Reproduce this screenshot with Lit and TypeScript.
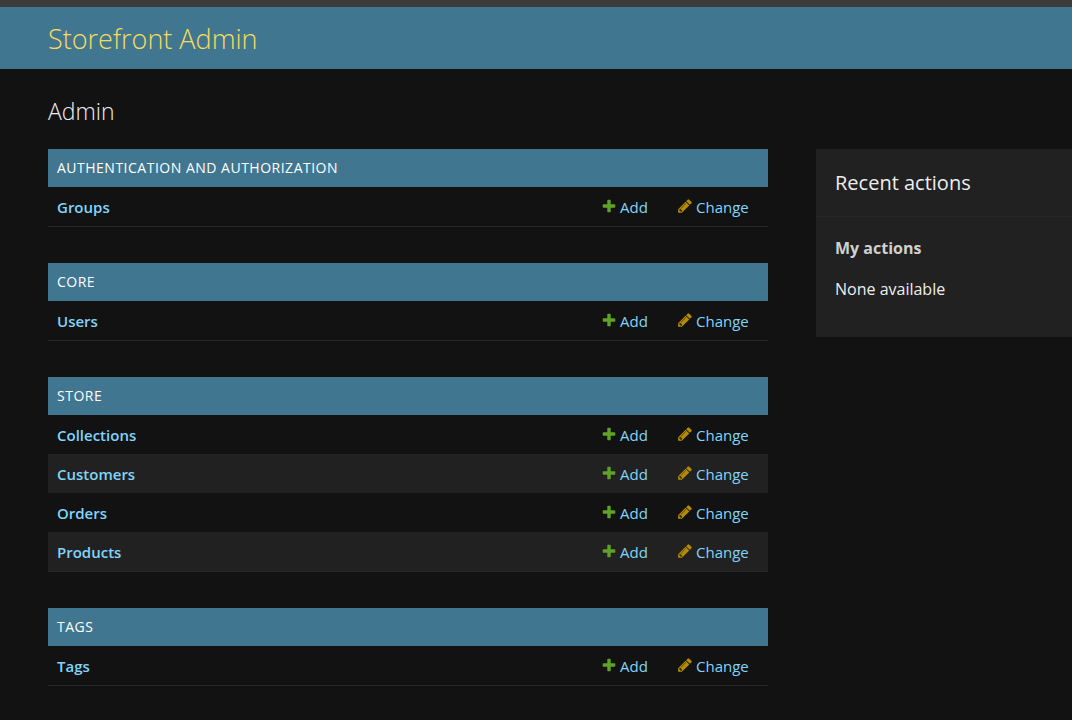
import { LitElement, html, css, svg } from "lit";
import { customElement, property } from "lit/decorators.js";

interface AppModule {
  label: string;
  models: string[];
}

const modules: AppModule[] = [
  { label: "Authentication and Authorization", models: ["Groups"] },
  { label: "Core", models: ["Users"] },
  { label: "Store", models: ["Collections", "Customers", "Orders", "Products"] },
  { label: "Tags", models: ["Tags"] },
];

const addIcon = svg`<path fill="#5fa225" d="M1600 796v192q0 40-28 68t-68 28h-416v416q0 40-28 68t-68 28h-192q-40 0-68-28t-28-68v-416h-416q-40 0-68-28t-28-68v-192q0-40 28-68t68-28h416v-416q0-40 28-68t68-28h192q40 0 68 28t28 68v416h416q40 0 68 28t28 68z"/>`;
const changeIcon = svg`<path fill="#b48c08" d="M491 1536l91-91-235-235-91 91v107h128v128h107zm523-928q0-22-22-22-10 0-17 7l-542 542q-7 7-7 17 0 22 22 22 10 0 17-7l542-542q7-7 7-17zm-54-192l416 416-832 832h-416v-416zm683 96q0 53-37 90l-166 166-416-416 166-165q36-38 90-38 53 0 91 38l235 234q37 39 37 91z"/>`;

@customElement("app-module")
export class AppModuleTable extends LitElement {
  @property({ attribute: false }) module!: AppModule;

  static styles = css`
    :host {
      display: block;
    }
    .table {
      width: 100%;
      table-layout: fixed;
      border-collapse: separate;
      border-spacing: 0;
      border-bottom: 1px solid #272727;
    }
    .caption {
      box-sizing: border-box;
      height: 38px;
      padding: 0 9px;
      background: #417690;
      font-size: 14px;
      line-height: 38px;
      letter-spacing: 0.5px;
      text-align: left;
      text-transform: uppercase;
    }
    .caption-link {
      color: #fff;
      text-decoration: none;
    }
    .row:nth-child(even) {
      background: #212121;
    }
    .cell {
      box-sizing: border-box;
      height: 39px;
      padding: 0 0 0 9px;
      text-align: left;
      vertical-align: middle;
      font-size: 15px;
      line-height: 20px;
      font-weight: 400;
    }
    .name {
      font-weight: 600;
    }
    .add {
      width: 76px;
    }
    .change {
      width: 100px;
    }
    .link {
      color: #81d4fa;
      text-decoration: none;
    }
    .action {
      display: flex;
      gap: 3px;
    }
    .icon {
      flex: none;
      width: 16px;
      height: 16px;
      margin-top: 1px;
    }
  `;

  render() {
    return html`
      <table class="table">
        <caption class="caption">
          <a class="caption-link" href="#">${this.module.label}</a>
        </caption>
        <tbody>
          ${this.module.models.map(
            (name) => html`<tr class="row">
              <th class="cell name" scope="row"><a class="link" href="#">${name}</a></th>
              <td class="cell add">
                <a class="link action" href="#"
                  ><svg class="icon" viewBox="0 0 1792 1792" aria-hidden="true">${addIcon}</svg>Add</a
                >
              </td>
              <td class="cell change">
                <a class="link action" href="#"
                  ><svg class="icon" viewBox="0 0 1792 1792" aria-hidden="true">${changeIcon}</svg>Change</a
                >
              </td>
            </tr>`
          )}
        </tbody>
      </table>
    `;
  }
}

@customElement("app-root")
export class AppRoot extends LitElement {
  static styles = css`
    :host {
      display: block;
      min-height: 100vh;
      box-sizing: border-box;
      border-top: 7px solid #3b3b3b;
      background: #121212;
      color: #eee;
      font-family: "Segoe UI", "Open Sans", "Noto Sans", sans-serif;
    }
    .header {
      padding: 12px 48px 10px;
      background: #417690;
    }
    .brand {
      margin: 0;
      font-size: 27px;
      line-height: 40px;
      font-weight: 300;
    }
    .brand-link {
      color: #f5dd5d;
      text-decoration: none;
    }
    .content {
      display: grid;
      grid-template-columns: minmax(0, 1fr) 256px;
      column-gap: 48px;
      align-items: start;
      padding: 24px 0 24px 48px;
    }
    .title {
      grid-column: 1 / -1;
      margin: 0 0 20px;
      font-size: 23px;
      line-height: 36px;
      font-weight: 300;
    }
    .modules {
      display: grid;
      gap: 36px;
    }
    .related {
      background: #212121;
    }
    .related-title {
      margin: 0;
      padding: 19px 19px 18px;
      border-bottom: 1px solid #272727;
      font-size: 20px;
      line-height: 30px;
      font-weight: 400;
    }
    .related-body {
      padding: 19px 19px 36px;
      font-size: 16px;
      line-height: 24px;
    }
    .related-sub {
      margin: 0 0 17px;
      color: #d0d0d0;
      font-size: 16px;
      line-height: 24px;
      font-weight: 700;
    }
    .related-text {
      margin: 0;
    }
  `;

  render() {
    return html`
      <header class="header">
        <h1 class="brand"><a class="brand-link" href="#">Storefront Admin</a></h1>
      </header>
      <main class="content">
        <h2 class="title">Admin</h2>
        <div class="modules">
          ${modules.map((m) => html`<app-module .module=${m}></app-module>`)}
        </div>
        <aside class="related">
          <h2 class="related-title">Recent actions</h2>
          <div class="related-body">
            <h3 class="related-sub">My actions</h3>
            <p class="related-text">None available</p>
          </div>
        </aside>
      </main>
    `;
  }
}
